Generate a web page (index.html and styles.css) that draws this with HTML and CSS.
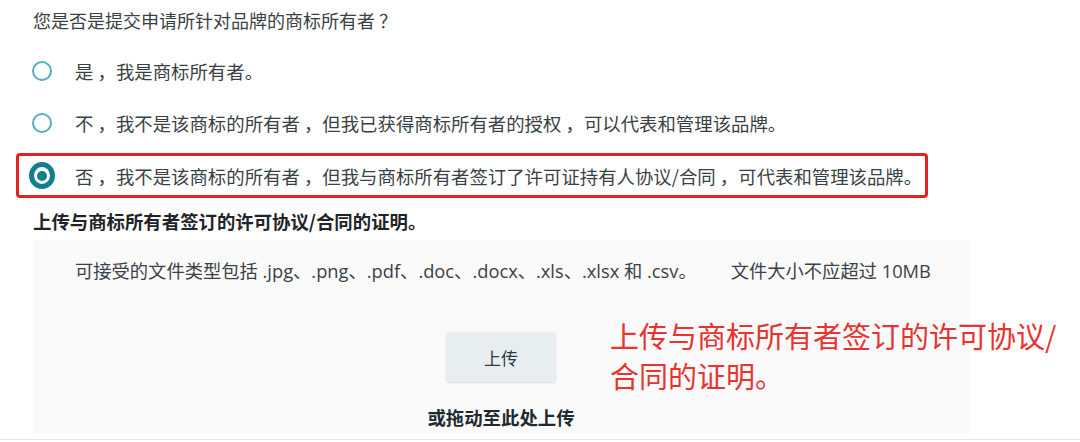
FILE: index.html
```html
<!DOCTYPE html>
<html lang="zh-CN">
<head>
<meta charset="utf-8">
<title>商标所有者</title>
<link rel="stylesheet" href="styles.css">
</head>
<body>
<div class="page">
  <div class="form">
    <p class="question">您是否是提交申请所针对品牌的商标所有者 ？</p>
    <div class="options">
      <div class="option">
        <span class="radio"><span class="ring"></span></span>
        <span class="label">是 ，我是商标所有者。</span>
      </div>
      <div class="option">
        <span class="radio"><span class="ring"></span></span>
        <span class="label">不 ，我不是该商标的所有者 ，但我已获得商标所有者的授权 ，可以代表和管理该品牌。</span>
      </div>
      <div class="option selected">
        <span class="radio"><span class="ring checked"><span class="dot"></span></span></span>
        <span class="label">否 ，我不是该商标的所有者 ，但我与商标所有者签订了许可证持有人协议/合同 ，可代表和管理该品牌。</span>
      </div>
    </div>
    <p class="upload-title">上传与商标所有者签订的许可协议/合同的证明。</p>
    <div class="dropzone">
      <p class="types">可接受的文件类型包括 .jpg、.png、.pdf、.doc、.docx、.xls、.xlsx 和 .csv。<span class="size">文件大小不应超过 10MB</span></p>
      <button class="upload-btn" type="button">上传</button>
      <p class="drag">或拖动至此处上传</p>
    </div>
  </div>
  <div class="rule"></div>
  <div class="note">上传与商标所有者签订的许可协议/<br>合同的证明。</div>
</div>
</body>
</html>
```
FILE: styles.css
```css
* { box-sizing: border-box; }
html, body { margin: 0; padding: 0; background: #ffffff; }
body {
  font-family: "Noto Sans CJK SC", "Noto Sans", sans-serif;
  color: #333a3e;
  width: 1080px;
  height: 442px;
  overflow: hidden;
}
.page { position: relative; width: 1080px; height: 442px; }
.form { padding: 8px 0 0 33px; }
.question {
  margin: 0;
  font-size: 18px;
  line-height: 24px;
  color: #3a3f44;
}
.options {
  margin-top: 16px;
  display: flex;
  flex-direction: column;
  align-items: flex-start;
  gap: 7.5px;
}
.option {
  margin-left: -17px;
  height: 45px;
  display: flex;
  align-items: center;
  padding: 0 3px 0 10px;
  border: 3px solid transparent;
  border-radius: 4px;
}
.option.selected { border-color: #e3221f; }
.radio {
  width: 26px;
  height: 26px;
  display: flex;
  align-items: center;
  justify-content: center;
  margin-right: 20px;
}
.ring {
  width: 20px;
  height: 20px;
  border: 2px solid #55adb9;
  border-radius: 50%;
  display: flex;
  align-items: center;
  justify-content: center;
}
.ring.checked {
  width: 27px;
  height: 27px;
  border: 5px solid #117f8c;
}
.dot {
  width: 10px;
  height: 10px;
  border-radius: 50%;
  background: #117f8c;
}
.label {
  font-size: 18.4px;
  line-height: 24px;
  color: #3a3f44;
  white-space: nowrap;
}
.upload-title {
  margin: 11px 0 0 0;
  font-size: 18.4px;
  line-height: 24px;
  font-weight: 700;
  color: #1f2428;
}
.dropzone {
  margin-top: 7px;
  width: 936px;
  height: 193px;
  background: #fafafa;
  padding: 20px 0 0 42px;
  display: flex;
  flex-direction: column;
  align-items: flex-start;
}
.types {
  margin: 0;
  font-family: "Open Sans", "Noto Sans CJK SC", sans-serif;
  font-size: 18.3px;
  line-height: 22px;
  color: #3b4146;
  white-space: nowrap;
}
.size { margin-left: 34px; }
.upload-btn {
  align-self: center;
  margin: 50px 0 0 -42px;
  width: 110px;
  height: 50px;
  border: none;
  border-radius: 3px;
  background: #e8eef0;
  box-shadow: 0 1px 2px rgba(0, 0, 0, 0.12);
  font-family: "Noto Sans CJK SC", "Noto Sans", sans-serif;
  font-size: 17px;
  color: #2f3a40;
  padding: 0;
}
.drag {
  align-self: center;
  margin: 23px 0 0 -42px;
  font-size: 18.4px;
  line-height: 24px;
  font-weight: 700;
  color: #1f2a30;
}
.rule {
  margin-top: 6px;
  border-top: 1px solid #e6e6e6;
}
.note {
  position: absolute;
  left: 610px;
  top: 315px;
  font-size: 29px;
  line-height: 40px;
  color: #e8332f;
  white-space: nowrap;
}
```
